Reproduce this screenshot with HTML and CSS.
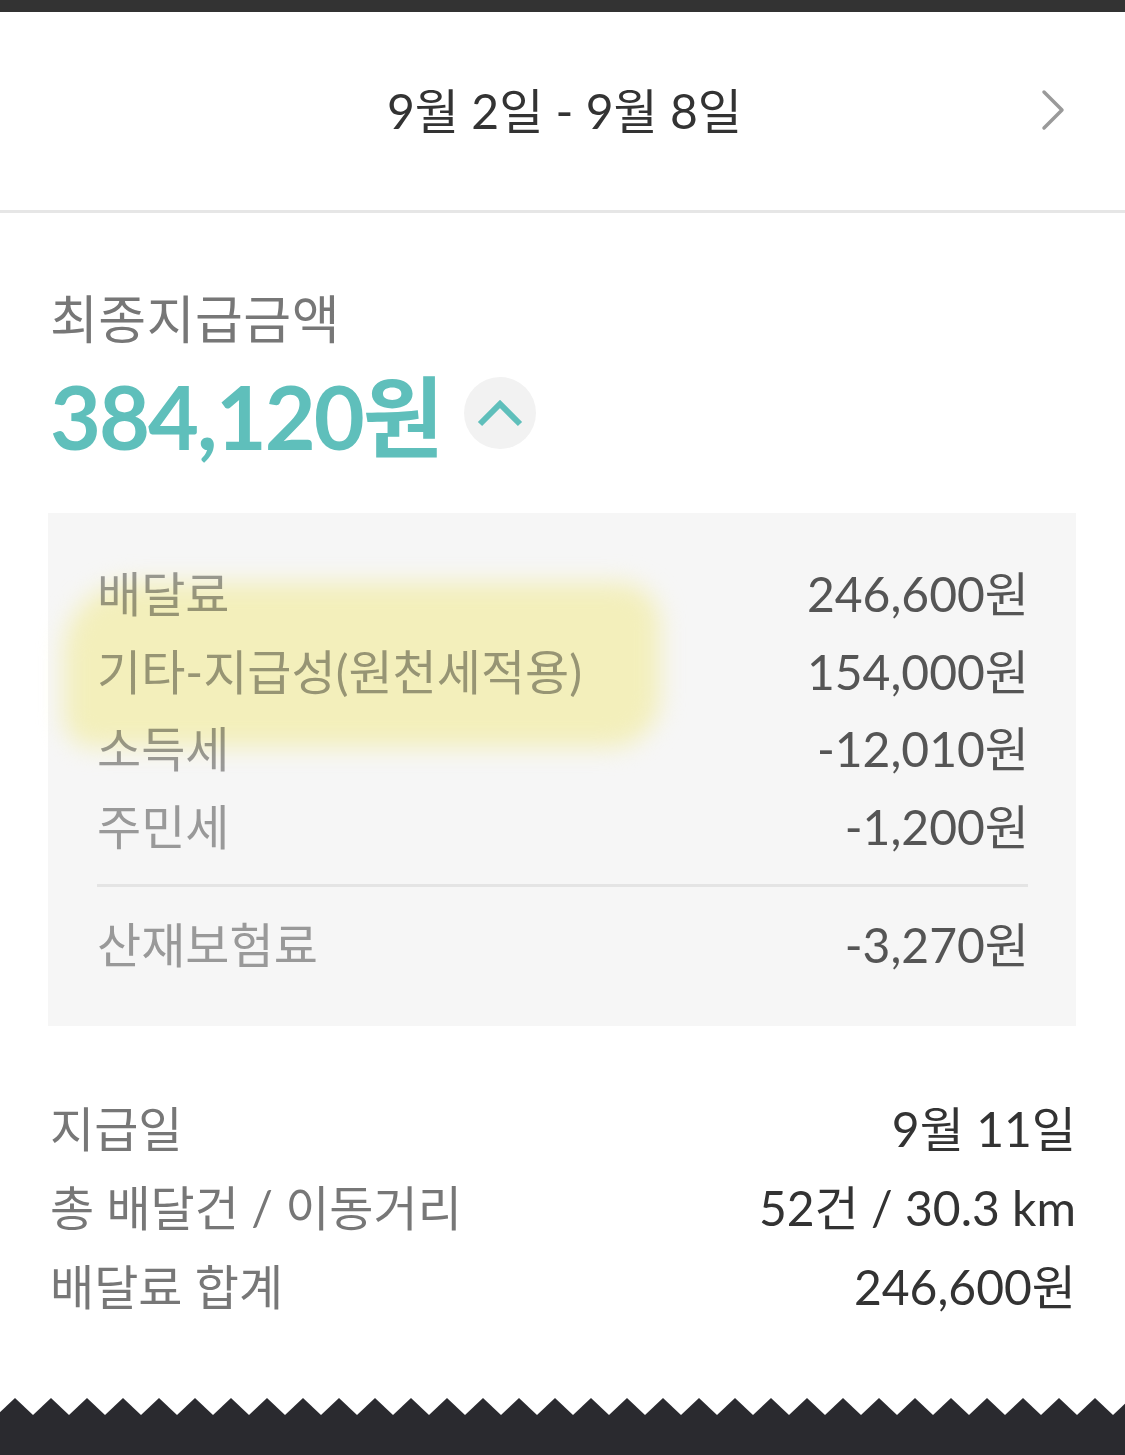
FILE: index.html
```html
<!DOCTYPE html>
<html lang="ko">

<head>
    <meta charset="UTF-8">
    <meta name="viewport" content="width=device-width, initial-scale=1.0">
    <title>정산 내역</title>
    <link rel="stylesheet" href="styles.css">
</head>

<body>

    <div class="top-bar"></div>

    <div class="week-header">
        <span class="week-title">9월 2일 - 9월 8일</span>
        <svg class="week-next" width="24" height="42" viewBox="0 0 24 42">
            <polyline points="3,3 21,21 3,39" fill="none" stroke="#9a9a9a" stroke-width="3.5"
                stroke-linecap="round" stroke-linejoin="round" />
        </svg>
    </div>

    <div class="summary">
        <div class="summary-label">최종지급금액</div>
        <div class="summary-amount">
            <span class="amount-text">384,120원</span>
            <button class="toggle-button">
                <svg width="48" height="30" viewBox="0 0 48 30">
                    <polyline points="4,26 24,6 44,26" fill="none" stroke="#5fbfbb" stroke-width="6" />
                </svg>
            </button>
        </div>
    </div>

    <div class="detail-box">
        <div class="marker"></div>
        <div class="detail-row"><span>배달료</span><span class="value">246,600원</span></div>
        <div class="detail-row"><span>기타-지급성(원천세적용)</span><span class="value">154,000원</span></div>
        <div class="detail-row"><span>소득세</span><span class="value">-12,010원</span></div>
        <div class="detail-row"><span>주민세</span><span class="value">-1,200원</span></div>
        <div class="detail-divider"></div>
        <div class="detail-row"><span>산재보험료</span><span class="value">-3,270원</span></div>
    </div>

    <div class="info-list">
        <div class="info-row"><span>지급일</span><span class="value">9월 11일</span></div>
        <div class="info-row"><span>총 배달건 / 이동거리</span><span class="value">52건 / 30.3 km</span></div>
        <div class="info-row"><span>배달료 합계</span><span class="value">246,600원</span></div>
    </div>

    <svg class="zigzag" width="1125" height="57" viewBox="0 0 1125 57">
        <defs>
            <pattern id="teeth" width="36" height="57" patternUnits="userSpaceOnUse"
                patternTransform="translate(-3 0)">
                <path d="M0 17 L18 0 L36 17 L36 57 L0 57 Z" fill="#2a2a2f" />
            </pattern>
        </defs>
        <rect width="1125" height="57" fill="url(#teeth)" />
    </svg>

</body>

</html>
```

FILE: styles.css
```css
body {
    font-family: Lato, "Noto Sans CJK KR", sans-serif;
    margin: 0;
    background-color: #fff;
    color: #333;
    width: 1125px;
    height: 1455px;
    overflow: hidden;
}

/* Top - week selector */
.top-bar {
    height: 12px;
    background-color: #333;
}

.week-header {
    height: 198px;
    display: flex;
    justify-content: center;
    align-items: center;
    position: relative;
    border-bottom: 3px solid #e6e6e6;
}

.week-title {
    font-size: 48px;
    color: #333;
    margin-left: 4px;
    margin-bottom: 6px;
}

.week-next {
    position: absolute;
    right: 60px;
    top: 77px;
}

/* Final amount */
.summary {
    padding: 74px 50px 0;
}

.summary-label {
    font-size: 52px;
    line-height: 64px;
    letter-spacing: 0.5px;
    color: #777;
}

.summary-amount {
    display: flex;
    align-items: center;
    height: 124px;
    margin-top: -2px;
}

.amount-text {
    font-size: 88px;
    font-weight: bold;
    color: #5fbfbb;
    letter-spacing: -2px;
}

.toggle-button {
    width: 72px;
    height: 72px;
    border-radius: 50%;
    border: none;
    background-color: #f2f2f2;
    margin-left: 22px;
    margin-top: 4px;
    padding: 0;
    display: flex;
    justify-content: center;
    align-items: center;
}

/* Breakdown box */
.detail-box {
    position: relative;
    margin: 40px 49px 0 48px;
    padding: 42px 47px 42px 49px;
    background-color: #f6f6f6;
}

.detail-row {
    display: flex;
    justify-content: space-between;
    font-size: 48px;
    line-height: 77.5px;
    color: #999;
}

.detail-row .value {
    color: #555;
}

.detail-divider {
    height: 3px;
    background-color: #e4e4e4;
    margin: 19px 1px 19px 0;
}

/* Yellow marker over the first rows */
.marker {
    position: absolute;
    left: 16px;
    top: 70px;
    width: 596px;
    height: 164px;
    background-color: #fcf8c2;
    border-radius: 70px 40px 50px 30px;
    filter: blur(12px);
    mix-blend-mode: multiply;
    pointer-events: none;
}

/* Payout info */
.info-list {
    padding: 63px 49px 0 50px;
}

.info-row {
    display: flex;
    justify-content: space-between;
    font-size: 48px;
    line-height: 79px;
    color: #777;
}

.info-row .value {
    color: #333;
}

.zigzag {
    display: block;
    position: absolute;
    left: 0;
    top: 1398px;
}
```
